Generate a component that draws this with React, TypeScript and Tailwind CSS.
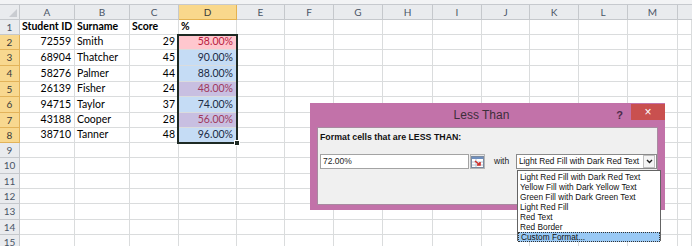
import React from "react";

type Col = { label: string; w: string };

const cols: Col[] = [
  { label: "A", w: "w-[55px]" },
  { label: "B", w: "w-[55px]" },
  { label: "C", w: "w-[49px]" },
  { label: "D", w: "w-[58px]" },
  { label: "E", w: "w-[48px]" },
  { label: "F", w: "w-[49px]" },
  { label: "G", w: "w-[49px]" },
  { label: "H", w: "w-[50px]" },
  { label: "I", w: "w-[49px]" },
  { label: "J", w: "w-[48px]" },
  { label: "K", w: "w-[49px]" },
  { label: "L", w: "w-[49px]" },
  { label: "M", w: "w-[50px]" },
];

const rowHeights = [
  "h-[15px]", "h-[15px]", "h-[16px]", "h-[16px]", "h-[15px]",
  "h-[16px]", "h-[15px]", "h-[15px]", "h-[15px]", "h-[16px]",
  "h-[15px]", "h-[15px]", "h-[16px]", "h-[15px]", "h-[15px]",
];

type Kind = "pink" | "blue" | "purple";

const data: { id: number; name: string; score: number; pct: string; kind: Kind }[] = [
  { id: 72559, name: "Smith", score: 29, pct: "58.00%", kind: "pink" },
  { id: 68904, name: "Thatcher", score: 45, pct: "90.00%", kind: "blue" },
  { id: 58276, name: "Palmer", score: 44, pct: "88.00%", kind: "blue" },
  { id: 26139, name: "Fisher", score: 24, pct: "48.00%", kind: "purple" },
  { id: 94715, name: "Taylor", score: 37, pct: "74.00%", kind: "blue" },
  { id: 43188, name: "Cooper", score: 28, pct: "56.00%", kind: "purple" },
  { id: 38710, name: "Tanner", score: 48, pct: "96.00%", kind: "blue" },
];

const pctStyle: Record<Kind, string> = {
  pink: "bg-[#ffc7ce] text-[#b8203e]",
  blue: "bg-[#c5dcf5] text-[#1c2a44]",
  purple: "bg-[#c8bfe1] text-[#a0385c]",
};

const options = [
  "Light Red Fill with Dark Red Text",
  "Yellow Fill with Dark Yellow Text",
  "Green Fill with Dark Green Text",
  "Light Red Fill",
  "Red Text",
  "Red Border",
  "Custom Format...",
];

const cell = "border-r border-b border-[#dadcdd] shrink-0 flex items-center overflow-hidden whitespace-nowrap";

function Row({ n }: { n: number }) {
  const selected = n >= 2 && n <= 8;
  const rec = n >= 2 && n <= 8 ? data[n - 2] : null;
  const content: React.ReactNode[] = cols.map(() => null);
  let dCls = "";
  if (n === 1) {
    content[0] = "Student ID";
    content[1] = "Surname";
    content[2] = "Score";
    content[3] = "%";
  } else if (rec) {
    content[0] = rec.id;
    content[1] = rec.name;
    content[2] = rec.score;
    content[3] = rec.pct;
    dCls = pctStyle[rec.kind];
  }
  return (
    <div className={`flex ${rowHeights[n - 1]}`}>
      <div
        className={`w-[20px] shrink-0 flex items-center justify-center border-r border-b text-[10px] ${
          selected
            ? "bg-[#f8d88f] border-[#e2b35a] text-[#3a3a3a]"
            : "bg-[#e9ebee] border-[#c5c8cc] text-[#4a5566]"
        }`}
      >
        {n}
      </div>
      {cols.map((c, i) => {
        const align =
          n === 1 ? "justify-start pl-[2px]" : i === 1 ? "justify-start pl-[2px]" : "justify-end pr-[3px]";
        return (
          <div
            key={c.label}
            className={`${cell} ${c.w} ${align} ${n === 1 ? "font-bold" : ""} ${i === 3 ? dCls : ""}`}
          >
            {content[i]}
          </div>
        );
      })}
      <div className={`${cell} flex-1`} />
    </div>
  );
}

function CollapseIcon() {
  return (
    <svg width="13" height="12" viewBox="0 0 13 12">
      <rect x="0.5" y="0.5" width="12" height="11" fill="#ffffff" stroke="#7a8aa0" />
      <rect x="1" y="1" width="11" height="2" fill="#6f8fbf" />
      <line x1="1" y1="6" x2="12" y2="6" stroke="#b8c4d4" />
      <line x1="1" y1="9" x2="12" y2="9" stroke="#b8c4d4" />
      <line x1="5" y1="3" x2="5" y2="11" stroke="#b8c4d4" />
      <path d="M4 5 L9 9 M9 6 L9 9 L6 9" stroke="#d0302a" strokeWidth="1.6" fill="none" />
    </svg>
  );
}

export default function App() {
  return (
    <div
      className="relative w-[692px] h-[246px] overflow-hidden bg-white text-[10.5px] text-black"
      style={{ fontFamily: "Lato, 'Liberation Sans', sans-serif" }}
    >
      <div className="h-[5px] bg-[#f2f3f5] border-b border-[#c6c9ce]" />

      {/* column headers */}
      <div className="flex h-[15px]">
        <div className="w-[20px] shrink-0 bg-[#e9ebee] border-r border-b border-[#c5c8cc] relative">
          <div className="absolute right-[2px] bottom-[2px] w-0 h-0 border-l-[8px] border-l-transparent border-b-[8px] border-b-[#c9ccd1]" />
        </div>
        {cols.map((c) => (
          <div
            key={c.label}
            className={`${c.w} shrink-0 flex items-center justify-center border-r border-b text-[10px] ${
              c.label === "D"
                ? "bg-[#f9d88c] border-[#e4b250] text-[#3a3a3a]"
                : "bg-[#e9ebee] border-[#c5c8cc] text-[#4a5566]"
            }`}
          >
            {c.label}
          </div>
        ))}
        <div className="flex-1 bg-[#e9ebee] border-b border-[#c5c8cc]" />
      </div>

      {Array.from({ length: 15 }, (_, i) => (
        <Row key={i} n={i + 1} />
      ))}

      {/* selection D2:D8 */}
      <div className="absolute left-[177px] top-[34px] w-[61px] h-[110px] border-2 border-[#1e2a24]" />
      <div className="absolute left-[234px] top-[140px] w-[6px] h-[6px] bg-[#1e2a24] border border-white" />

      {/* dialog */}
      <div
        className="absolute left-[310px] top-[103px] w-[355px] h-[107px] bg-[#c272a9] flex flex-col px-[7px] pb-[5px]"
        style={{ fontFamily: "'Liberation Sans', Arial, sans-serif" }}
      >
        <div className="relative h-[24px] flex items-center justify-center pr-[12px] pb-[1px]">
          <span className="text-[12px] text-[#3d2f3a]">Less Than</span>
          <span className="absolute right-[35px] top-[4px] text-[11px] font-bold text-[#4a2a48]">?</span>
          <div className="absolute right-[-7px] top-[1px] w-[34px] h-[16px] bg-[#c9504f] flex items-center justify-center text-white text-[12px]">
            ×
          </div>
        </div>
        <div className="relative flex-1 bg-[#f0f0f0] border border-[#a88aa0] flex flex-col pl-[2px]">
          <div className="mt-[4px] h-[12px] flex items-center text-[8.8px] font-bold text-[#111]">
            Format cells that are LESS THAN:
          </div>
          <div className="mt-[10px] flex items-center h-[15px]">
            <div className="w-[150px] h-[15px] bg-white border border-[#a3a3a3] flex items-center pl-[2px] text-[8.5px] text-[#222]">
              72.00%
            </div>
            <div className="ml-[1px] w-[15px] h-[15px] border border-[#b5b5b5] bg-[#e8e8e8] flex items-center justify-center">
              <CollapseIcon />
            </div>
            <span className="ml-[9px] w-[22px] text-[8.5px] text-[#222]">with</span>
            <div className="w-[142px] h-[15px] bg-white border border-[#8a8a8a] flex items-center">
              <span className="flex-1 pl-[2px] text-[8.3px] text-[#111] whitespace-nowrap">
                Light Red Fill with Dark Red Text
              </span>
              <div className="w-[12px] h-[13px] mr-[1px] border border-[#c0c0c0] bg-[#f4f4f4] flex items-center justify-center">
                <svg width="7" height="5" viewBox="0 0 7 5">
                  <path d="M1 1 L3.5 3.5 L6 1" stroke="#222" strokeWidth="1.4" fill="none" />
                </svg>
              </div>
            </div>
          </div>

          <div className="absolute left-[199px] top-[42px] w-[144px] h-[71px] bg-white border border-[#646464] flex flex-col py-[1px] z-10">
            {options.map((o, i) => (
              <div
                key={o}
                className={`h-[10px] flex items-center pl-[2px] text-[8.3px] text-[#111] whitespace-nowrap ${
                  i === options.length - 1 ? "bg-[#99c9f5] border border-dotted border-[#333]" : ""
                }`}
              >
                {o}
              </div>
            ))}
          </div>
        </div>
      </div>
    </div>
  );
}
